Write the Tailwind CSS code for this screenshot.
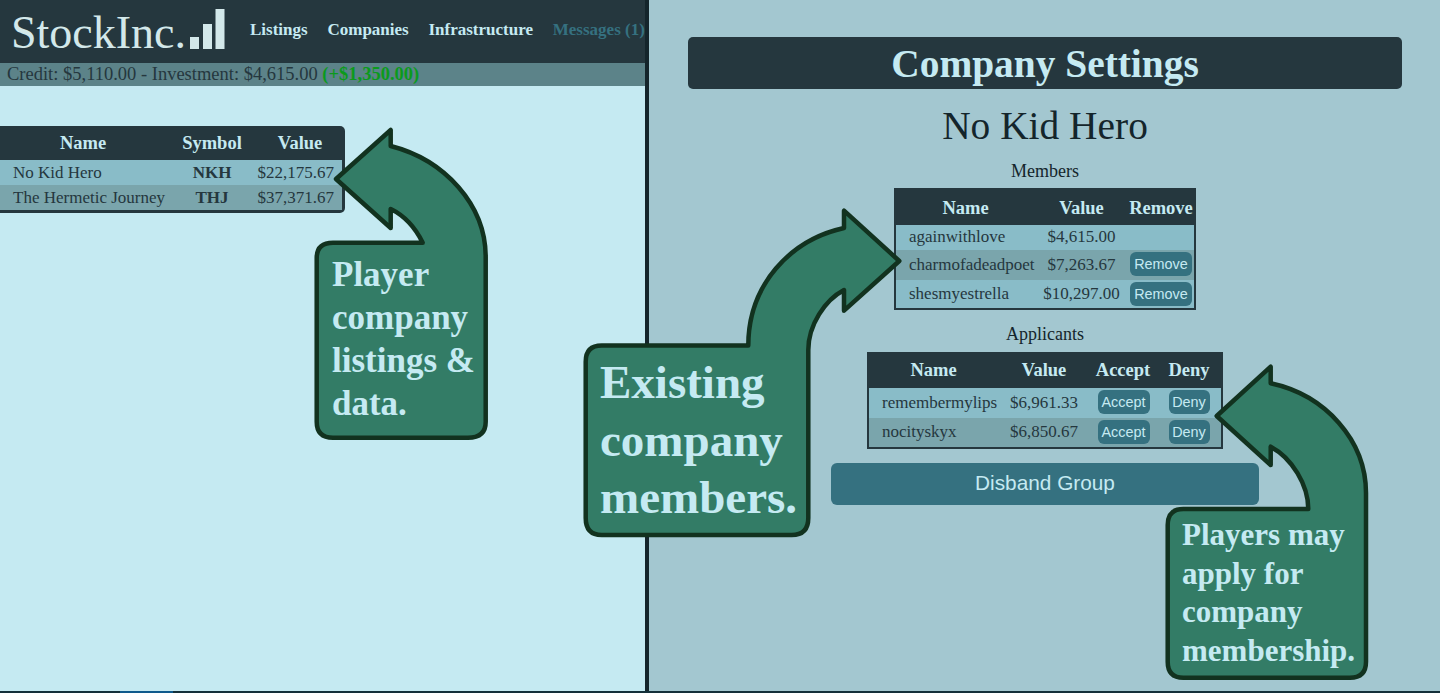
<!DOCTYPE html>
<html lang="en">
<head>
    <meta charset="UTF-8">
    <title>Company Settings</title>
    <script src="https://cdn.jsdelivr.net/npm/@tailwindcss/browser@4"></script>
</head>
<body class="bg-[#25373e] font-['Liberation_Serif',serif] text-[#25373e]">
<div class="relative w-[1440px] h-[693px] overflow-hidden flex">

    <!-- left screenshot -->
    <div class="w-[645px] h-full bg-[#c5eaf2] shrink-0">
        <div class="h-[63px] bg-[#25373e] flex items-center">
            <div class="flex items-end w-[250px] shrink-0 pl-[11px] h-full">
                <span class="text-[46px] leading-[50px] mb-[5px] text-[#d3e8ea]">StockInc.</span>
                <svg class="absolute left-0 top-0" width="240" height="63" viewBox="0 0 240 63">
                    <rect x="190" y="37" width="9" height="12" fill="#d3e8ea"/>
                    <rect x="203" y="24" width="9" height="25" fill="#d3e8ea"/>
                    <rect x="215.500" y="9" width="9" height="40" fill="#d3e8ea"/>
                </svg>
            </div>
            <nav class="flex gap-[19.800px] text-[17px] font-bold text-[#c5eaf2] whitespace-nowrap -mt-[3px]">
                <a>Listings</a>
                <a>Companies</a>
                <a>Infrastructure</a>
                <a class="text-[#357180]">Messages (1)</a>
            </nav>
        </div>
        <div class="h-[23px] bg-[#5c8389] pl-[7px] text-[18.500px] leading-[22px] whitespace-nowrap">
            Credit: $5,110.00 - Investment: $4,615.00 <span class="font-bold text-[#0b9a1c]">(+$1,350.00)</span>
        </div>
        <div class="mt-[40px] w-[345px] bg-[#25373e] rounded-r-[5px] pr-[3px] pb-[3px]">
            <table class="w-[342px] table-fixed border-collapse text-[17px] leading-[20px]">
                <thead>
                    <tr class="h-[34px] text-[18.500px] text-[#c5eaf2]">
                        <th class="w-[172px] pr-[6px]">Name</th>
                        <th class="w-[80px]">Symbol</th>
                        <th class="pl-[6px]">Value</th>
                    </tr>
                </thead>
                <tbody>
                    <tr class="h-[25px] bg-[#89bcc8]">
                        <td class="pl-[13px]">No Kid Hero</td>
                        <td class="text-center font-bold">NKH</td>
                        <td class="text-right pr-[8px]">$22,175.67</td>
                    </tr>
                    <tr class="h-[25px] bg-[#7aa5ac]">
                        <td class="pl-[13px] whitespace-nowrap">The Hermetic Journey</td>
                        <td class="text-center font-bold">THJ</td>
                        <td class="text-right pr-[8px]">$37,371.67</td>
                    </tr>
                </tbody>
            </table>
        </div>
    </div>

    <div class="w-[4px] h-full bg-[#14252b] shrink-0"></div>

    <!-- right screenshot -->
    <div class="flex-1 h-full bg-[#a3c7d0] flex flex-col items-center pt-[37px] pl-[1px]">
        <h1 class="w-[714px] h-[52px] bg-[#25373e] rounded-[5px] text-[39.400px] leading-[55px] font-bold text-center text-[#c5eaf2]">Company Settings</h1>
        <h2 class="mt-[14px] text-[39.400px] leading-[46px] text-[#14252b]">No Kid Hero</h2>
        <p class="mt-[12px] text-[18px] leading-[21px] text-[#14252b]">Members</p>

        <table class="mt-[6px] w-[302px] table-fixed border-collapse border-[2px] border-[#25373e] text-[17px] leading-[20px]">
            <thead>
                <tr class="h-[36px] bg-[#25373e] text-[18.500px] text-[#c5eaf2]">
                    <th class="w-[142px] pr-[2px]">Name</th>
                    <th class="w-[89px]">Value</th>
                    <th class="pl-[2px]">Remove</th>
                </tr>
            </thead>
            <tbody>
                <tr class="h-[25px] bg-[#89bcc8]">
                    <td class="pl-[13px] pb-[2px]">againwithlove</td>
                    <td class="text-center pb-[2px]">$4,615.00</td>
                    <td></td>
                </tr>
                <tr class="h-[30px] bg-[#7aa5ac]">
                    <td class="pl-[13px]">charmofadeadpoet</td>
                    <td class="text-center">$7,263.67</td>
                    <td class="text-center pl-[2px] pb-[2px]"><button class="w-[62px] h-[24px] align-middle rounded-[6px] bg-[#357180] text-[#c5eaf2] text-[14.400px] font-['Liberation_Sans',sans-serif]">Remove</button></td>
                </tr>
                <tr class="h-[29px] bg-[#89bcc8]">
                    <td class="pl-[13px]">shesmyestrella</td>
                    <td class="text-center">$10,297.00</td>
                    <td class="text-center pl-[2px]"><button class="w-[62px] h-[24px] align-middle rounded-[6px] bg-[#357180] text-[#c5eaf2] text-[14.400px] font-['Liberation_Sans',sans-serif]">Remove</button></td>
                </tr>
            </tbody>
        </table>

        <p class="mt-[14px] text-[18px] leading-[21px] text-[#14252b]">Applicants</p>

        <table class="mt-[7px] w-[356px] table-fixed border-collapse border-[2px] border-[#25373e] text-[17px] leading-[20px]">
            <thead>
                <tr class="h-[35px] bg-[#25373e] text-[18.500px] text-[#c5eaf2]">
                    <th class="w-[136px] pr-[6px] pb-[2px]">Name</th>
                    <th class="w-[80px] pb-[2px]">Value</th>
                    <th class="w-[78px] pb-[2px]">Accept</th>
                    <th class="pr-[5px] pb-[2px]">Deny</th>
                </tr>
            </thead>
            <tbody>
                <tr class="h-[30px] bg-[#89bcc8]">
                    <td class="pl-[13px]">remembermylips</td>
                    <td class="text-center">$6,961.33</td>
                    <td class="text-center pl-[1px] pb-[2px]"><button class="w-[52px] h-[24px] align-middle rounded-[6px] bg-[#357180] text-[#c5eaf2] text-[14.400px] font-['Liberation_Sans',sans-serif]">Accept</button></td>
                    <td class="text-center pr-[5px] pb-[2px]"><button class="w-[41px] h-[24px] align-middle rounded-[6px] bg-[#357180] text-[#c5eaf2] text-[14.400px] font-['Liberation_Sans',sans-serif]">Deny</button></td>
                </tr>
                <tr class="h-[30px] bg-[#7aa5ac]">
                    <td class="pl-[13px] pb-[2px]">nocityskyx</td>
                    <td class="text-center pb-[2px]">$6,850.67</td>
                    <td class="text-center pl-[1px] pb-[2px]"><button class="w-[52px] h-[24px] align-middle rounded-[6px] bg-[#357180] text-[#c5eaf2] text-[14.400px] font-['Liberation_Sans',sans-serif]">Accept</button></td>
                    <td class="text-center pr-[5px] pb-[2px]"><button class="w-[41px] h-[24px] align-middle rounded-[6px] bg-[#357180] text-[#c5eaf2] text-[14.400px] font-['Liberation_Sans',sans-serif]">Deny</button></td>
                </tr>
            </tbody>
        </table>

        <button class="mt-[14px] w-[428px] h-[42px] rounded-[6px] bg-[#357180] text-[#c5eaf2] text-[20.800px] leading-[40px] pb-[2px] font-['Liberation_Sans',sans-serif]">Disband Group</button>
    </div>

    <!-- sliver of the taskbar along the bottom edge -->
    <div class="absolute left-0 bottom-0 w-full h-[2px] bg-[#14303a]">
        <div class="ml-[120px] w-[53px] h-full bg-[#0f5a8c]"></div>
    </div>

    <!-- callout arrows drawn over the screenshots -->
    <svg class="absolute left-0 top-0" width="1440" height="693" viewBox="0 0 1440 693" fill="#337c66" stroke="#12321f" stroke-width="4.500" stroke-linejoin="round">
        <path d="M336 179 L390.700 130 L390.700 146 C445 160 485.700 205 485.700 257 L485.700 421.700 Q485.700 437.700 468 437.700 L333 437.700 Q316.700 437.700 316.700 421.700 L316.700 258 Q316.700 242.700 333 242.700 L422.700 242.700 C415 227 403 215 390.700 209 L390.700 228 Z"/>
        <path d="M899.300 261 L844 210.700 L844 228 C790 240 748.300 285 748.300 345.500 L601.700 345.500 Q585.700 345.500 585.700 361.700 L585.700 518 Q585.700 535 601.700 535 L791.700 535 Q808.300 535 808.300 518 L808.300 350 C808.300 325 825 300 844 290 L844 310.700 Z"/>
        <path d="M1216.700 416 L1270.700 366.700 L1270.700 383.300 C1325 395 1366 440 1366 493 L1366 661.700 Q1366 677.700 1350 677.700 L1183.300 677.700 Q1167.700 677.700 1167.700 661.700 L1167.700 525 Q1167.700 509 1183.300 509 L1308.300 509 C1308.300 485 1292 458 1270.700 446.700 L1270.700 465 Z"/>
    </svg>
    <p class="absolute left-[332px] top-[253px] text-[35px] leading-[43px] font-bold text-[#c5eaf2]">Player<br>company<br>listings &amp;<br>data.</p>
    <p class="absolute left-[600px] top-[354px] text-[47px] leading-[57.500px] font-bold text-[#c5eaf2]">Existing<br>company<br>members.</p>
    <p class="absolute left-[1182px] top-[516px] text-[31px] leading-[38.500px] font-bold text-[#c5eaf2]">Players may<br>apply for<br>company<br>membership.</p>
</div>
</body>
</html>
